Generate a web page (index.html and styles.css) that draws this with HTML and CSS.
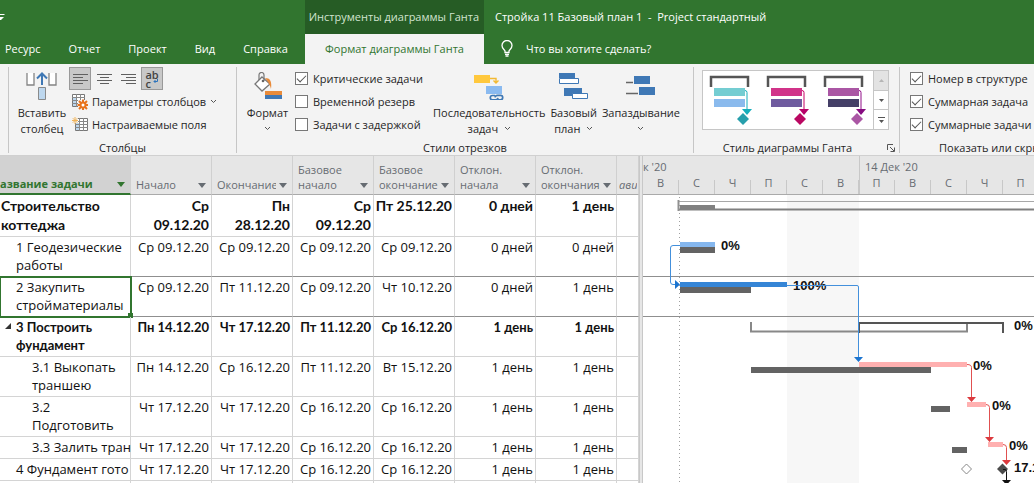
FILE: index.html
```html
<!DOCTYPE html>
<html lang="ru">
<head>
<meta charset="utf-8">
<title>Стройка 11 Базовый план 1 - Project стандартный</title>
<link rel="stylesheet" href="styles.css">
</head>
<body>
<div class="app">
  <header class="titlebar">
    <div class="quick">
      <svg width="5" height="8" viewBox="0 0 5 8"><path d="M0 1.500h4.500" stroke="#fff"/><path d="M0 4h4L1 7H0z" fill="#fff"/></svg>
    </div>
    <nav class="tabs">
      <a class="tab" href="#">Ресурс</a>
      <a class="tab" href="#">Отчет</a>
      <a class="tab" href="#">Проект</a>
      <a class="tab" href="#">Вид</a>
      <a class="tab" href="#">Справка</a>
    </nav>
    <div class="context">
      <span class="context-title">Инструменты диаграммы Ганта</span>
      <a class="context-tab" href="#">Формат диаграммы Ганта</a>
    </div>
    <h1 class="doc-title">Стройка 11 Базовый план 1&nbsp; -&nbsp; Project стандартный</h1>
    <button class="tell-me">
      <svg width="12" height="17" viewBox="0 0 12 17" fill="none" stroke="#fff" stroke-width="1.300"><path d="M4 12.500V11C3.500 9.500 1 8.500 1 5.500a5 5 0 0 1 10 0C11 8.500 8.500 9.500 8 11v1.500zM4 14.300h4M4.500 16h3"/></svg>
      Что вы хотите сделать?
    </button>
  </header>

  <section class="ribbon">
    <div class="group g-columns">
      <div class="group-body">
        <button class="big">
          <svg width="32" height="28" viewBox="0 0 32 28"><path d="M1 1v12h7V1M23 1v12h7V1" fill="#fff" stroke="#848484" stroke-width="1.300"/><path d="M12.500 15.500h7v12h-7z" fill="#bdd7ee" stroke="#8a8a8a"/><path d="M16 13V2M11 6.500L16 1.500l5 5" fill="none" stroke="#3f78b5" stroke-width="2"/></svg>
          <span>Вставить<br>столбец</span>
        </button>
        <div class="rows">
          <div class="row tools">
            <button class="tool on" aria-label="По левому краю"><svg width="15" height="12" viewBox="0 0 15 12"><path d="M0 1.500h15M0 4.500h10M0 7.500h15M0 10.500h10" stroke="#606060"/></svg></button>
            <button class="tool" aria-label="По центру"><svg width="15" height="12" viewBox="0 0 15 12"><path d="M0 1.500h15M3 4.500h9M0 7.500h15M3 10.500h9" stroke="#606060"/></svg></button>
            <button class="tool" aria-label="По правому краю"><svg width="15" height="12" viewBox="0 0 15 12"><path d="M0 1.500h15M5 4.500h10M0 7.500h15M5 10.500h10" stroke="#606060"/></svg></button>
            <button class="tool on wrap"><span>ab<br>c</span><svg width="5" height="5" viewBox="0 0 5 5"><path d="M4.500 0v2.500H1M2.500 1L1 2.500 2.500 4" fill="none" stroke="#2b73bd"/></svg></button>
          </div>
          <button class="row small">
            <svg width="16" height="16" viewBox="0 0 16 16"><path d="M.5.500h12v12H.5z" fill="#fff" stroke="#777"/><path d="M1 3h3v9H1z" fill="#bdd7ee"/><path d="M0 3.500h13M0 6.500h13M0 9.500h13M4.500 0v13M8.500 0v13" stroke="#888"/><path d="M6 6h10v10H6z" fill="#f3f3f3"/><path d="M11 5.500v11M5.500 11h11M7 7l8 8M15 7l-8 8" stroke="#e8731c" stroke-width="2"/><circle cx="11" cy="11" r="3.500" fill="#e8731c"/><circle cx="11" cy="11" r="1.500" fill="#fff"/></svg>
            Параметры столбцов
            <svg class="chev" width="7" height="5" viewBox="0 0 7 5"><path d="M1 1l2.500 2.500L6 1"/></svg>
          </button>
          <button class="row small">
            <svg width="16" height="15" viewBox="0 0 16 15"><path d="M3.500 1.500h12v12h-12z" fill="#fff" stroke="#777"/><path d="M4 6h4v7H4z" fill="#bdd7ee"/><path d="M7.500 1v13M11.500 1v13M3 4.500h13M3 7.500h13M3 10.500h13" stroke="#888"/><path d="M0 0h6v6H0z" fill="#f3f3f3"/><path d="M3 0v7M0 3.500h6M.8 1.200l4.500 4.500M5.300 1.200L.8 5.700" stroke="#efb45c"/></svg>
            Настраиваемые поля
          </button>
        </div>
      </div>
      <div class="group-label">Столбцы</div>
    </div>

    <div class="group g-styles">
      <div class="group-body">
        <button class="big">
          <svg width="28" height="28" viewBox="0 0 28 28"><path d="M8 5l8 7-8 7-7-7z" fill="#fff" stroke="#777" stroke-width="1.300"/><path d="M5 8V3a2.500 2.500 0 0 1 5 0v6" fill="none" stroke="#777" stroke-width="1.200"/><circle cx="9" cy="9" r="1.300" fill="#666"/><path d="M11 6c5 0 7 3 6 11-1-4-2-6-6-11z" fill="#e98b3a"/><path d="M11 19h17v4H11z" fill="#e98b3a"/><path d="M11 23h17v4H11z" fill="#3f78b5"/></svg>
          <span>Формат</span>
          <svg class="chev" width="7" height="5" viewBox="0 0 7 5"><path d="M1 1l2.500 2.500L6 1"/></svg>
        </button>
        <div class="rows checks">
          <label class="row"><input type="checkbox" checked>Критические задачи</label>
          <label class="row"><input type="checkbox">Временной резерв</label>
          <label class="row"><input type="checkbox">Задачи с задержкой</label>
        </div>
        <button class="big">
          <svg width="32" height="28" viewBox="0 0 32 28"><path d="M1 3h16v8H1z" fill="#ffc83d"/><path d="M17 6.500h6V11M20.500 8.500L23 11l2.500-2.500" fill="none" stroke="#f2b932" stroke-width="1.400"/><path d="M13 14h16v8H13z" fill="#8abaf0"/><path d="M15 22h16v7H15z" fill="#f3f3f3"/><g fill="none" stroke="#3f78b5" stroke-width="1.700"><path d="M22 23.500h-2.500a2.200 2.200 0 0 0 0 4.400h3a2.500 2.500 0 0 0 2.500-2"/><path d="M25 27.800h2.500a2.200 2.200 0 0 0 0-4.400h-3a2.500 2.500 0 0 0-2.500 2"/></g></svg>
          <span>Последовательность<br>задач&nbsp; <svg class="chev" width="7" height="5" viewBox="0 0 7 5"><path d="M1 1l2.500 2.500L6 1"/></svg></span>
        </button>
        <button class="big">
          <svg width="30" height="28" viewBox="0 0 30 28"><path d="M0 1h16v5H0z" fill="#3f78b5"/><path d="M.5 6.500h19v5H.5z" fill="#fff" stroke="#3f78b5"/><path d="M5 16h18v8H5z" fill="#3f78b5"/><path d="M13.500 21.500h15v5h-15z" fill="#fff" stroke="#3f78b5"/></svg>
          <span>Базовый<br>план&nbsp; <svg class="chev" width="7" height="5" viewBox="0 0 7 5"><path d="M1 1l2.500 2.500L6 1"/></svg></span>
        </button>
        <button class="big">
          <svg width="30" height="28" viewBox="0 0 30 28"><path d="M8 4h16v8H8zM13 15h16v8H13z" fill="#3f78b5"/><path d="M0 10.500h7M0 21.500h12" stroke="#666" stroke-width="1.500"/></svg>
          <span>Запаздывание</span>
          <svg class="chev" width="7" height="5" viewBox="0 0 7 5"><path d="M1 1l2.500 2.500L6 1"/></svg>
        </button>
      </div>
      <div class="group-label">Стили отрезков</div>
    </div>

    <div class="group g-gallery">
      <div class="group-body">
        <div class="gallery">
          <button class="style s1" aria-label="Стиль 1"><svg width="44" height="50" viewBox="0 0 44 50"><path d="M2 12V2h37v10" fill="none" stroke="#555" stroke-width="2.500"/><path class="a" d="M5 13h31v8H5z"/><path class="b" d="M5 24h31v8H5z"/><path class="l" d="M36 15.500q2 0 2 2V35" /><path class="h" d="M33 34h10l-5 6z"/><path class="d" d="M34 38l6 6-6 6-6-6z"/></svg></button>
          <button class="style s2" aria-label="Стиль 2"><svg width="44" height="50" viewBox="0 0 44 50"><path d="M2 12V2h37v10" fill="none" stroke="#555" stroke-width="2.500"/><path class="a" d="M5 13h31v8H5z"/><path class="b" d="M5 24h31v8H5z"/><path class="l" d="M36 15.500q2 0 2 2V35" /><path class="h" d="M33 34h10l-5 6z"/><path class="d" d="M34 38l6 6-6 6-6-6z"/></svg></button>
          <button class="style s3" aria-label="Стиль 3"><svg width="44" height="50" viewBox="0 0 44 50"><path d="M2 12V2h37v10" fill="none" stroke="#555" stroke-width="2.500"/><path class="a" d="M5 13h31v8H5z"/><path class="b" d="M5 24h31v8H5z"/><path class="l" d="M36 15.500q2 0 2 2V35" /><path class="h" d="M33 34h10l-5 6z"/><path class="d" d="M34 38l6 6-6 6-6-6z"/></svg></button>
          <div class="scroller">
            <button class="off" aria-label="Вверх"><svg width="5" height="3" viewBox="0 0 5 3"><path d="M0 3h5L2.500 0z" fill="#b5b5b5"/></svg></button>
            <button aria-label="Вниз"><svg width="5" height="3" viewBox="0 0 5 3"><path d="M0 0h5L2.500 3z" fill="#555"/></svg></button>
            <button aria-label="Дополнительно"><svg width="7" height="6" viewBox="0 0 7 6"><path d="M0 0h7v1H0zM1 3h5L3.500 6z" fill="#555"/></svg></button>
          </div>
        </div>
      </div>
      <div class="group-label">Стиль диаграммы Ганта</div>
      <button class="launcher" aria-label="Параметры"><svg width="8" height="8" viewBox="0 0 8 8"><path d="M.5 6V.5H6M3 3l4 4M7.500 3.500v4h-4" fill="none" stroke="#555"/></svg></button>
    </div>

    <div class="group g-show">
      <div class="group-body">
        <div class="rows checks">
          <label class="row"><input type="checkbox" checked>Номер в структуре</label>
          <label class="row"><input type="checkbox" checked>Суммарная задача</label>
          <label class="row"><input type="checkbox" checked>Суммарные задачи</label>
        </div>
      </div>
      <div class="group-label">Показать или скрыть</div>
    </div>
  </section>

  <main class="work">
    <table class="grid">
      <colgroup><col class="c-name"><col class="c-date"><col class="c-date"><col class="c-date"><col class="c-date"><col class="c-date"><col class="c-date"><col class="c-add"></colgroup>
      <thead>
        <tr>
          <th class="sel"><div class="th"><span>азвание задачи</span><button aria-label="Фильтр"></button></div></th>
          <th><div class="th"><span>Начало</span><button aria-label="Фильтр"></button></div></th>
          <th><div class="th"><span>Окончание</span><button aria-label="Фильтр"></button></div></th>
          <th><div class="th"><span>Базовое<br>начало</span><button aria-label="Фильтр"></button></div></th>
          <th><div class="th"><span>Базовое<br>окончание</span><button aria-label="Фильтр"></button></div></th>
          <th><div class="th"><span>Отклон.<br>начала</span><button aria-label="Фильтр"></button></div></th>
          <th><div class="th"><span>Отклон.<br>окончания</span><button aria-label="Фильтр"></button></div></th>
          <th class="add"><div class="th"><span>ави</span></div></th>
        </tr>
      </thead>
      <tbody>
        <tr class="project"><td>Строительство коттеджа</td><td>Ср<br>09.12.20</td><td>Пн<br>28.12.20</td><td>Ср<br>09.12.20</td><td class="nw">Пт 25.12.20</td><td>0 дней</td><td>1 день</td><td></td></tr>
        <tr class="two l1"><td>1 Геодезические работы</td><td>Ср 09.12.20</td><td>Ср 09.12.20</td><td>Ср 09.12.20</td><td>Ср 09.12.20</td><td>0 дней</td><td>0 дней</td><td></td></tr>
        <tr class="two l1 current"><td>2 Закупить стройматериалы<i class="handle"></i></td><td>Ср 09.12.20</td><td>Пт 11.12.20</td><td>Ср 09.12.20</td><td>Чт 10.12.20</td><td>0 дней</td><td>1 день</td><td></td></tr>
        <tr class="two l1 summary"><td><button class="fold" aria-label="Свернуть"><svg width="6" height="6" viewBox="0 0 6 6"><path d="M6 0v6H0z" fill="#333"/></svg></button>3 Построить фундамент</td><td>Пн 14.12.20</td><td>Чт 17.12.20</td><td>Пт 11.12.20</td><td>Ср 16.12.20</td><td>1 день</td><td>1 день</td><td></td></tr>
        <tr class="two l2"><td>3.1 Выкопать траншею</td><td>Пн 14.12.20</td><td>Ср 16.12.20</td><td>Пт 11.12.20</td><td>Вт 15.12.20</td><td>1 день</td><td>1 день</td><td></td></tr>
        <tr class="two l2"><td>3.2<br>Подготовить</td><td>Чт 17.12.20</td><td>Чт 17.12.20</td><td>Ср 16.12.20</td><td>Ср 16.12.20</td><td>1 день</td><td>1 день</td><td></td></tr>
        <tr class="one l2"><td>3.3 Залить тран</td><td>Чт 17.12.20</td><td>Чт 17.12.20</td><td>Ср 16.12.20</td><td>Ср 16.12.20</td><td>1 день</td><td>1 день</td><td></td></tr>
        <tr class="one l1"><td>4 Фундамент гото</td><td>Чт 17.12.20</td><td>Чт 17.12.20</td><td>Ср 16.12.20</td><td>Ср 16.12.20</td><td>1 день</td><td>1 день</td><td></td></tr>
        <tr class="one"><td></td><td></td><td></td><td></td><td></td><td></td><td></td><td></td></tr>
      </tbody>
    </table>
    <div class="splitter"></div>
    <section class="gantt">
      <div class="scale">
        <div class="weeks"><span class="prev">к '20</span><span class="week">14 Дек '20</span></div>
        <div class="days"><span>В</span><span>С</span><span>Ч</span><span>П</span><span>С</span><span>В</span><span>П</span><span>В</span><span>С</span><span>Ч</span><span>П</span></div>
      </div>
      <svg class="chart" role="img" aria-label="Диаграмма Ганта">
        <rect x="144" y="0" width="72" height="100%" fill="#f7f7f7"/>
        <path d="M0 81.500h2000M0 121.500h2000" stroke="#8f8f8f"/>
        <path d="M36.500 2v400" stroke="#a0a0a0" stroke-dasharray="1 3"/>
        <g fill="none">
          <path d="M36 6.500h2000" stroke="#a8a8a8"/>
          <path d="M36 14.500h2000" stroke="#808080" stroke-width="2"/>
          <path d="M35.500 5v11" stroke="#909090" stroke-width="2"/>
        </g>
        <path d="M37 10h35v4H37z" fill="#808080"/>
        <path d="M37 47h35v5H37z" fill="#85b7ee"/>
        <path d="M37 52h35v6H37z" fill="#636363"/>
        <path d="M37 87h107v5H37z" fill="#3585d6"/>
        <path d="M37 92h71v6H37z" fill="#636363"/>
        <path d="M108 127v9.500h216V127" fill="none" stroke="#888" stroke-width="2"/>
        <path d="M216 138v-10h144v10" fill="none" stroke="#555" stroke-width="2"/>
        <path d="M216 167h108v5H216zM324 207h19v5h-19zM345 247h15v5h-15z" fill="#ffb0b0"/>
        <path d="M108 172h180v6H108zM288 211h19v6h-19zM309 252h15v6h-15z" fill="#636363"/>
        <g class="labels">
          <text x="78" y="55">0%</text>
          <text x="150" y="95">100%</text>
          <text x="371" y="135">0%</text>
          <text x="330" y="175">0%</text>
          <text x="349" y="215">0%</text>
          <text x="366" y="255">0%</text>
          <text x="371" y="277">17.12</text>
        </g>
        <g fill="none" stroke="#4390dc">
          <path d="M37 50.500h-7q-2.500 0-2.500 2.500v34q0 2.500 2.500 2.500h4"/>
          <path d="M144 90.500h70q1.500 0 1.500 1.500v71"/>
        </g>
        <path d="M32 85l5 4.500-5 4.500zM211 162h9l-4.500 5z" fill="#1b74cf"/>
        <path d="M324 169.500q4.500 0 4.500 3V203M343 209.500q3.500 0 3.500 3V243M360 249.500q3.500 0 3.500 3V266" fill="none" stroke="#e05050"/>
        <path d="M324 202h9l-4.500 5zM342 242h9l-4.500 5zM359 265h9l-4.500 5z" fill="#dc3a3e"/>
        <path d="M323.500 269l5 5-5 5-5-5z" fill="#fff" stroke="#888"/>
        <path d="M359.500 268.500l5.500 5.500-5.500 5.500-5.500-5.500z" fill="#4c4c4c"/>
        <path d="M360 274.500h2q1.500 0 1.500 2V286" fill="none" stroke="#111"/>
        <path d="M359 285h9l-4.500 5z" fill="#111"/>
      </svg>
    </section>
  </main>
</div>
</body>
</html>
```
FILE: styles.css
```css
* { box-sizing: border-box; }
body { margin: 0; font: 500 11px/16px "Open Sans", "Noto Sans", sans-serif; color: #262626; background: #fff; }
button { font: inherit; color: inherit; background: none; border: 0; padding: 0; margin: 0; }
a { text-decoration: none; color: inherit; }
svg { display: block; flex: none; }
.app { display: flex; flex-direction: column; height: 100vh; overflow: hidden; white-space: nowrap; }

.titlebar { display: grid; grid-template: 33px 31px / 305px auto 1fr; background: #31752f; color: #fff; }
.quick { grid-area: 1 / 1; padding-top: 13px; }
.tabs { grid-area: 2 / 1; display: flex; align-items: center; gap: 28px; padding-left: 5px; }
.context { grid-area: 1 / 2 / 3 / 3; display: grid; grid-template-rows: 34px 30px; width: 179px; text-align: center; }
.context-title { background: #265c25; color: #d2e4d0; display: flex; align-items: center; justify-content: flex-end; padding-right: 5px; }
.context-tab { background: #f3f3f3; color: #31752f; display: grid; place-items: center; }
.doc-title { grid-area: 1 / 3; margin: 0; font: inherit; align-self: center; padding-left: 11px; }
.tell-me { grid-area: 2 / 3; display: flex; align-items: center; gap: 13px; padding-left: 17px; }

.ribbon { display: flex; background: #f3f3f3; height: 92px; padding-top: 3px; border-bottom: 1px solid #d0d0d0; flex: none; }
.group { position: relative; display: flex; flex-direction: column; flex: none; height: 86px; }
.group + .group, .g-columns { border-left: 1px solid #c6c6c6; }
.g-columns { width: 228px; margin-left: 8px; }
.g-styles { width: 457px; }
.g-gallery { width: 206px; }
.g-show { width: 200px; }
.group-body { display: flex; height: 73px; flex: none; }
.group-label { text-align: center; }
.big { display: flex; flex-direction: column; align-items: center; padding-top: 5px; }
.big > span { margin-top: 5px; }
.big > .chev { margin-top: 5px; }
.chev { display: inline-block; fill: none; stroke: #555; vertical-align: 2px; }
.rows { display: flex; flex-direction: column; }
.row { display: flex; align-items: center; height: 23px; }
.g-columns .group-body { padding-left: 8px; gap: 2px; }
.g-columns .big { width: 50px; }
.tools { gap: 2px; }
.tool { width: 22px; height: 23px; display: grid; place-items: center; }
.tool.on { background: #c8c8c8; border: 1px solid #999; }
.wrap { position: relative; line-height: 9px; font-weight: 600; text-align: left; color: #444; }
.wrap svg { position: absolute; right: 4px; bottom: 5px; }
.small { gap: 4px; padding-left: 3px; }
.g-styles .group-body { padding-left: 8px; gap: 5px; }
.g-styles .big:first-child { width: 45px; }
.checks .row { gap: 5px; }
.g-styles .checks { width: 133px; }
input[type=checkbox] { appearance: none; width: 13px; height: 13px; margin: 0; border: 1px solid #777; background: #fff; flex: none; display: grid; place-items: center; }
input[type=checkbox]:checked::before { content: ""; width: 8px; height: 4px; border: solid #555; border-width: 0 0 1px 1px; transform: rotate(-45deg); margin-bottom: 3px; }
.g-gallery .group-body { padding: 3px 0 0 8px; }
.g-gallery .group-label { padding-right: 18px; }
.gallery { display: flex; width: 187px; height: 60px; background: #fff; border: 1px solid #c6c6c6; }
.style { flex: 1; display: grid; place-items: center; }
.scroller { width: 15px; display: flex; flex-direction: column; border-left: 1px solid #c6c6c6; }
.scroller button { flex: 1; display: grid; place-items: center; }
.scroller button + button { border-top: 1px solid #c6c6c6; }
.scroller .off { background: #e3e3e3; }
.style .l { fill: none; }
.s1 .a { fill: #74cdd2; } .s1 .b { fill: #8abaed; } .s1 .l { stroke: #16aebb; } .s1 .h { fill: #16aebb; } .s1 .d { fill: #279fac; }
.s2 .a { fill: #d13389; } .s2 .b { fill: #6f5b9f; } .s2 .l { stroke: #c70065; } .s2 .h { fill: #b80068; } .s2 .d { fill: #ba0862; }
.s3 .a { fill: #aa56a4; } .s3 .b { fill: #443f67; } .s3 .l { stroke: #900d87; } .s3 .h { fill: #860b80; } .s3 .d { fill: #aa56a4; }
.launcher { position: absolute; right: 4px; bottom: 1px; }
.g-show .group-body { padding-left: 10px; }
.g-show .group-label { text-align: left; padding-left: 39px; }

.work { display: flex; flex: 1; min-height: 0; }
.grid { border-collapse: separate; border-spacing: 0; table-layout: fixed; width: 639px; flex: none; align-self: flex-start; font: 13px/18px "Open Sans", sans-serif; color: #111; }
.c-name { width: 131px; } .c-date { width: 81px; } .c-add { width: 22px; }
.grid th { height: 39px; padding: 0 0 1px; vertical-align: bottom; background: #e6e6e6; border-right: 1px solid #d0d0d0; border-bottom: 1px solid #aaa; font: 11px/15px "Open Sans", sans-serif; color: #666c72; text-align: left; }
.grid .sel { background: #d2d2d2; color: #31752f; font-weight: 700; border-bottom: 2px solid #31752f; }
.th { display: flex; align-items: flex-end; justify-content: space-between; padding: 1px 5px; }
.sel .th { padding-left: 0; }
.th span { overflow: hidden; }
.th button { border: solid transparent; border-width: 5px 4px 0; border-top-color: #666c72; margin: 0 0 4px 3px; }
.sel .th button { border-top-color: #31752f; }
.grid .add { font-style: italic; }
.add .th { padding: 1px 0 1px 2px; }
.grid td { padding: 1px 2px 0; vertical-align: top; text-align: right; border-right: 1px solid #d4d4d4; border-bottom: 1px solid #d4d4d4; }
.grid td:first-child { text-align: left; padding-left: 1px; white-space: normal; position: relative; }
.project { height: 42px; font: 700 14px/19px Lato, "Open Sans", sans-serif; }
.grid .project .nw { padding-left: 0; }
.two { height: 40px; }
.one { height: 22px; }
.grid .l1 td:first-child { padding-left: 16px; }
.grid .l2 td:first-child { padding-left: 32px; }
.grid .one td:first-child { padding-right: 0; white-space: nowrap; }
.summary { font-family: Lato, "Open Sans", sans-serif; font-weight: 700; }
.l1:nth-child(2) td, .current td { border-bottom-color: #8f8f8f; }
.grid .current td:first-child { outline: 2px solid #31752f; outline-offset: -1px; }
.handle { position: absolute; right: -3px; bottom: -2px; width: 5px; height: 5px; background: #31752f; }
.fold { position: absolute; left: 5px; top: 6px; }

.splitter { width: 4px; background: #e6e6e6; border: solid #c8c8c8; border-width: 0 1px; flex: none; }
.gantt { flex: 1; min-width: 0; display: flex; flex-direction: column; overflow: hidden; }
.scale { background: #e6e6e6; border-bottom: 1px solid #aaa; color: #666c72; height: 39px; flex: none; overflow: hidden; font-weight: 400; }
.weeks { display: flex; height: 24px; line-height: 22px; }
.prev { width: 216px; flex: none; }
.week { border-left: 1px solid #c8c8c8; padding-left: 5px; height: 39px; }
.days { display: flex; height: 14px; }
.days span { width: 36px; flex: none; text-align: center; line-height: 6px; border-right: 1px solid #c8c8c8; }
.chart { flex: 1; width: 100%; min-height: 0; }
.labels { font: 700 13px "Liberation Sans", Arial, sans-serif; fill: #111; }
```
